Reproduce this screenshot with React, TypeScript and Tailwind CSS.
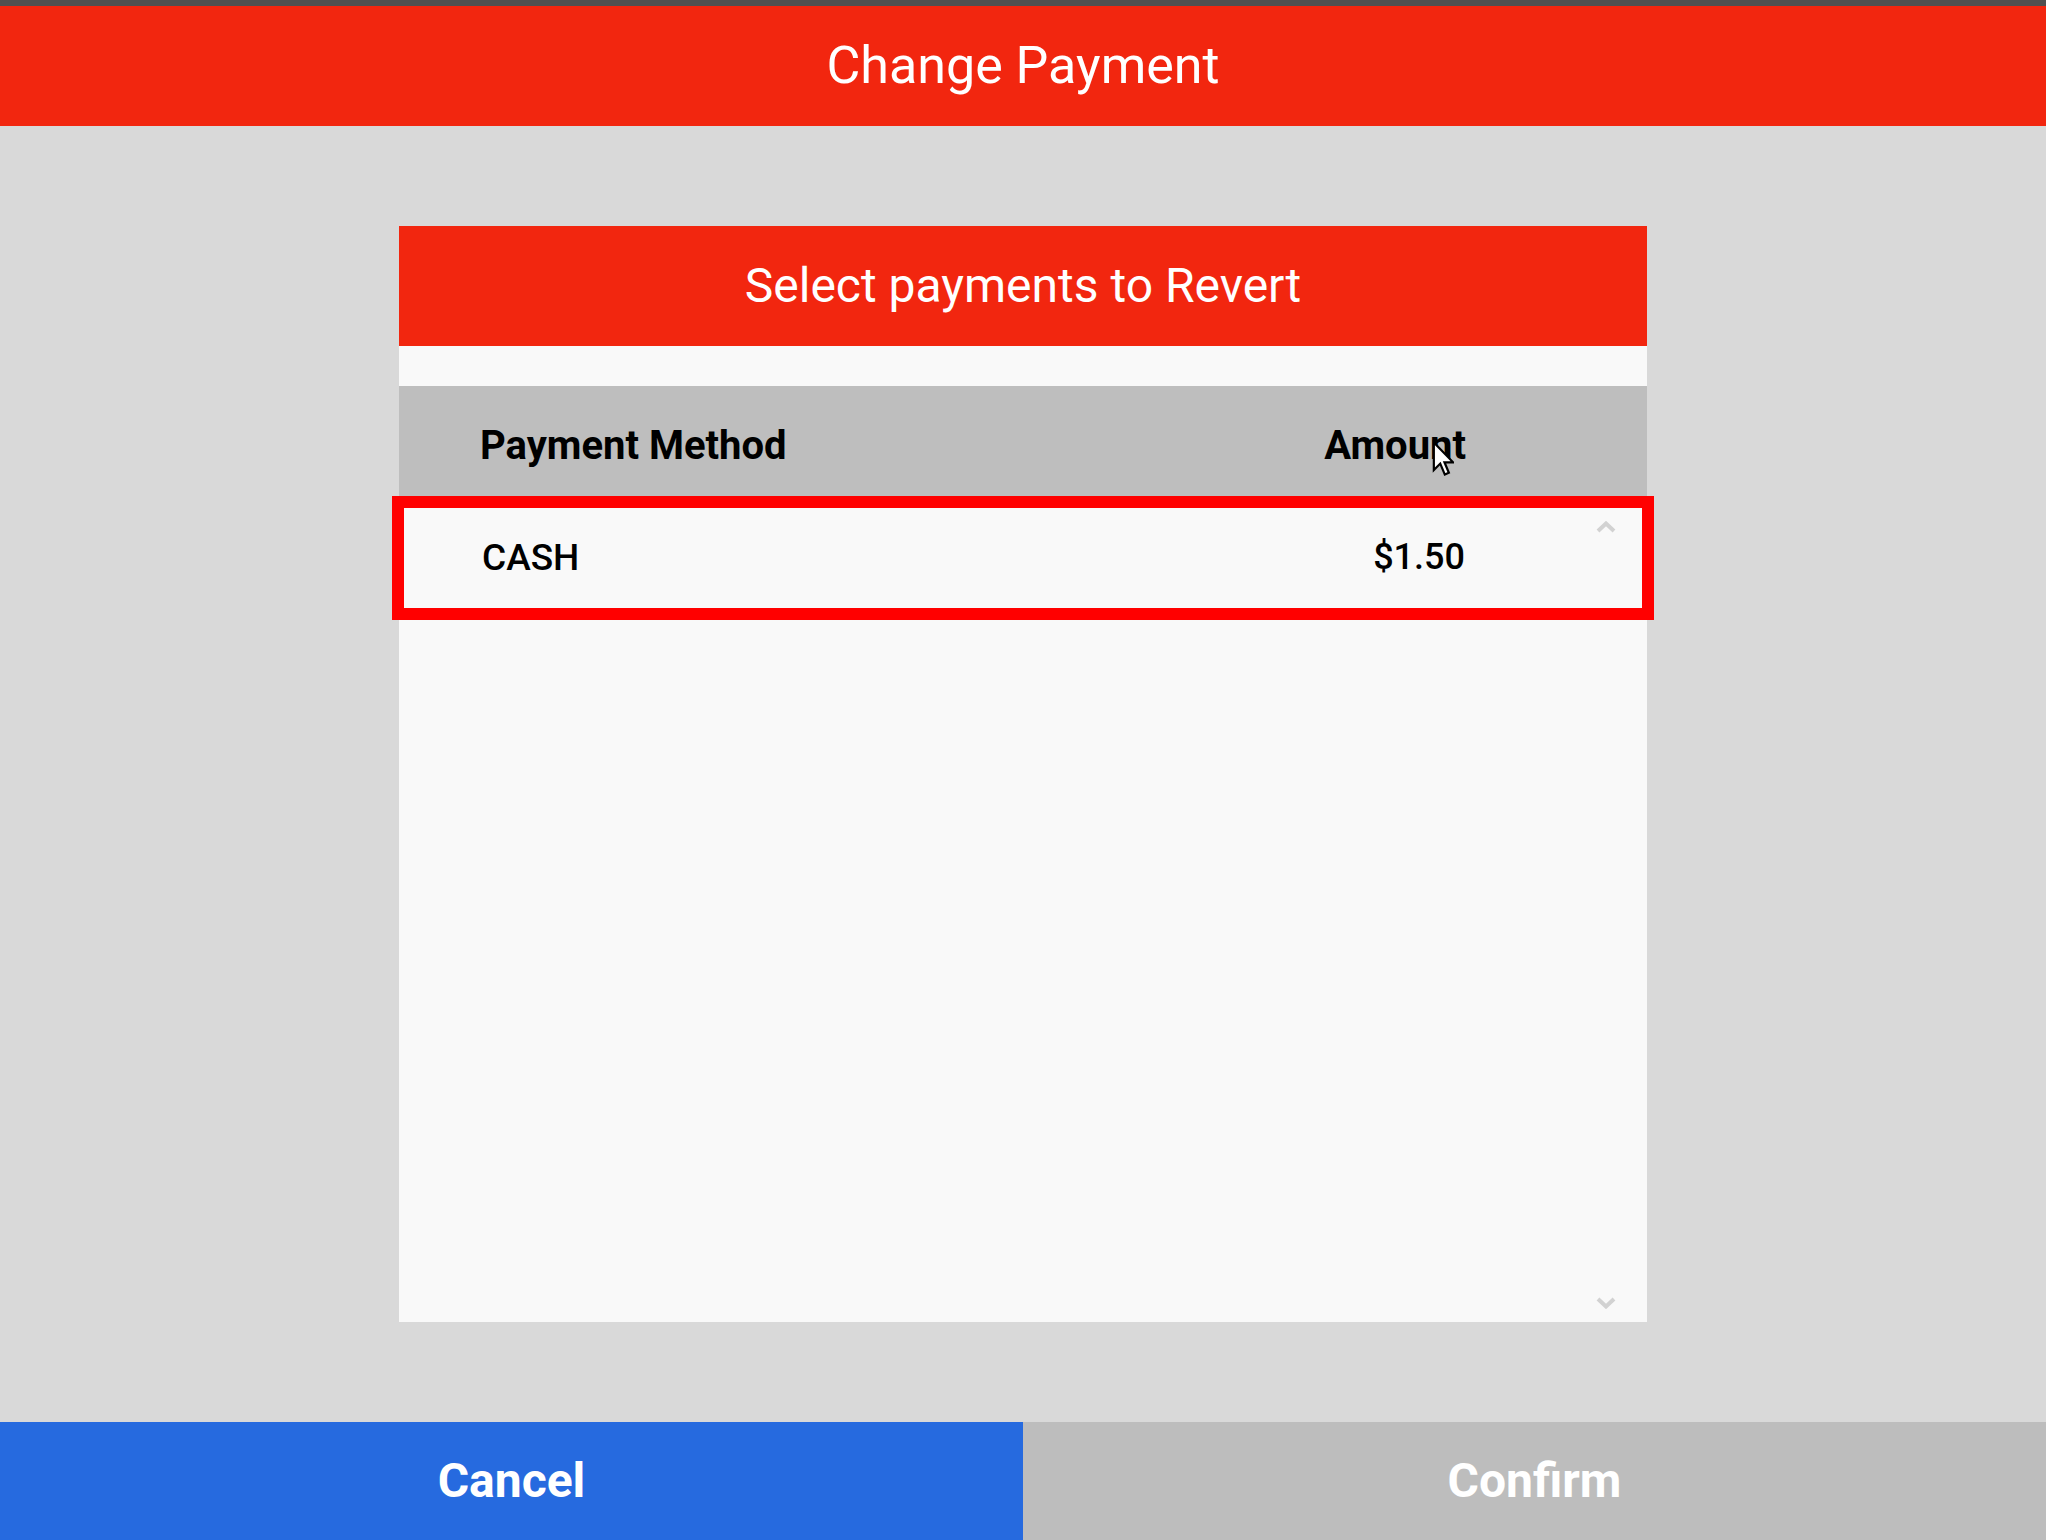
import React from "react";

const FONT = { fontFamily: "Roboto, 'Liberation Sans', Arial, sans-serif" };

function Chevron({ up }: { up?: boolean }) {
  return (
    <svg width="20" height="12" viewBox="0 0 20 12" className="block">
      <path
        d={up ? "M2 10 L10 2.5 L18 10" : "M2 2 L10 9.5 L18 2"}
        fill="none"
        stroke="#d2d2d2"
        strokeWidth="4"
        strokeLinejoin="miter"
      />
    </svg>
  );
}

function Cursor() {
  return (
    <svg
      width="22"
      height="40"
      viewBox="0 0 12 20"
      className="absolute left-[1432px] top-[439px] pointer-events-none"
    >
      <path
        d="M1 1 L1 16 L4.5 12.5 L7 18.5 L9.2 17.5 L6.8 11.8 L11.5 11.8 Z"
        fill="#ffffff"
        stroke="#000000"
        strokeWidth="1.2"
        strokeLinejoin="miter"
      />
    </svg>
  );
}

export default function App() {
  return (
    <div className="relative flex h-[1540px] w-[2046px] flex-col bg-[#d9d9d9]" style={FONT}>
      {/* Top strip */}
      <div className="h-[6px] bg-[#505050]" />

      {/* Page title */}
      <div className="flex h-[120px] items-center justify-center bg-[#f2260f]">
        <h1 className="text-[52px] font-normal leading-none text-white">Change Payment</h1>
      </div>

      {/* Panel */}
      <div className="flex flex-1 justify-center py-[100px]">
        <div className="flex w-[1248px] flex-col bg-[#f9f9f9]">
          <div className="flex h-[120px] items-center justify-center bg-[#f2260f]">
            <h2 className="text-[48px] font-normal leading-none text-white">
              Select payments to Revert
            </h2>
          </div>
          <div className="h-[40px]" />

          <div className="flex h-[110px] items-center justify-between bg-[#bebebe] pl-[81px] pr-[181px] pt-[10px]">
            <span className="text-[40px] font-bold leading-none text-black">Payment Method</span>
            <span className="text-[40px] font-bold leading-none text-black">Amount</span>
          </div>

          <div className="flex flex-1">
            <div className="flex-1">
              <div className="relative flex h-[114px] items-center justify-between border-b-2 border-[#d8d8d8] pl-[83px] pr-[101px] pt-[10px]">
                <span className="text-[37px] font-medium leading-none text-black">CASH</span>
                <span className="text-[36px] font-medium leading-none text-black">$1.50</span>
                <div className="pointer-events-none absolute -bottom-[12px] -left-[7px] -right-[88px] top-0 border-[12px] border-[#ff0000]" />
              </div>
            </div>
            <div className="flex w-[81px] flex-col items-center justify-between pb-[13px] pt-[25px] pr-[2px]">
              <Chevron up />
              <Chevron />
            </div>
          </div>
        </div>
      </div>

      {/* Actions */}
      <div className="flex h-[118px]">
        <button className="flex w-[1023px] items-center justify-center bg-[#266adf] text-[48px] font-bold text-white">
          Cancel
        </button>
        <button className="flex flex-1 items-center justify-center bg-[#bdbdbd] text-[48px] font-bold text-white">
          Confirm
        </button>
      </div>

      <Cursor />
    </div>
  );
}
